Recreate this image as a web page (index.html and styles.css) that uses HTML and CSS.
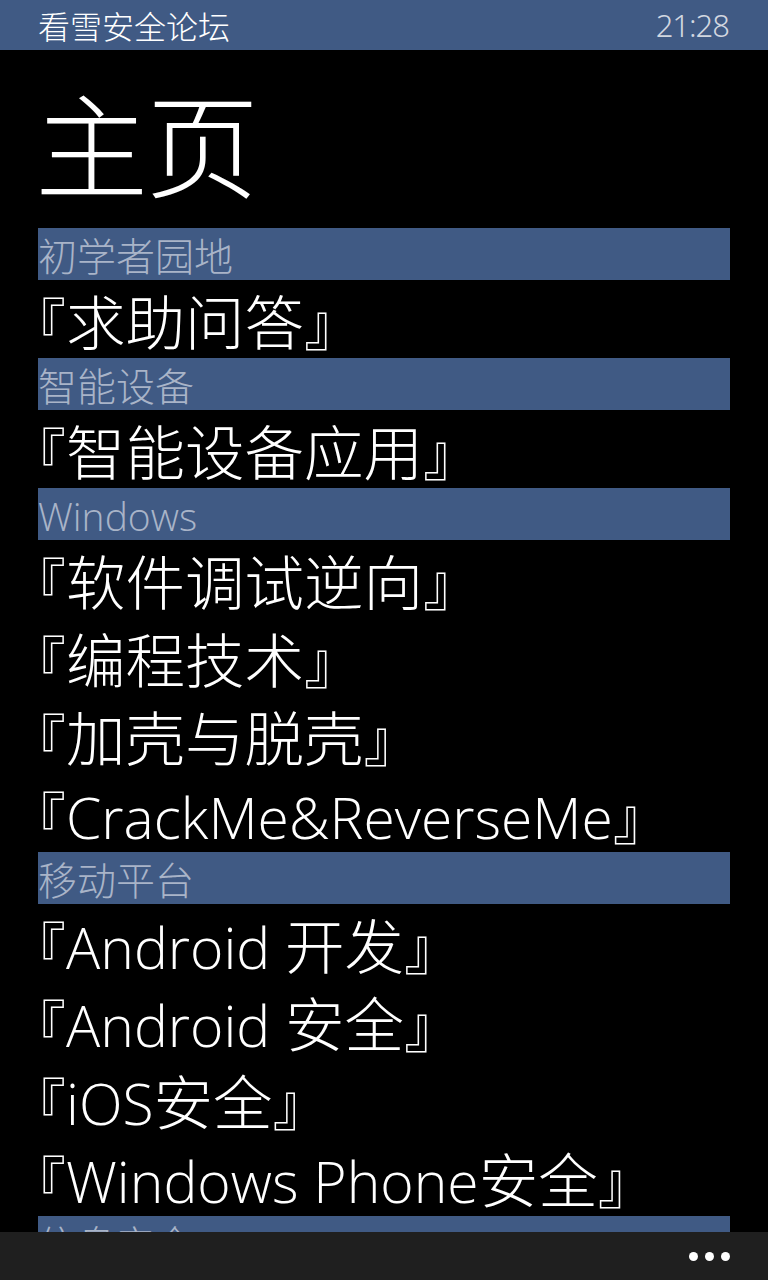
FILE: index.html
```html
<!DOCTYPE html>
<html lang="zh-CN">
<head>
<meta charset="utf-8">
<title>看雪安全论坛</title>
<link rel="stylesheet" href="styles.css">
</head>
<body>
<header class="status">
  <span class="app-name">看雪安全论坛</span>
  <span class="clock">21:28</span>
</header>
<main class="page">
  <h1 class="title">主页</h1>
  <section class="group">
    <div class="group-header">初学者园地</div>
    <div class="item"><span class="lb">『</span>求助问答<span class="rb">』</span></div>
  </section>
  <section class="group">
    <div class="group-header">智能设备</div>
    <div class="item"><span class="lb">『</span>智能设备应用<span class="rb">』</span></div>
  </section>
  <section class="group">
    <div class="group-header">Windows</div>
    <div class="item"><span class="lb">『</span>软件调试逆向<span class="rb">』</span></div>
    <div class="item"><span class="lb">『</span>编程技术<span class="rb">』</span></div>
    <div class="item"><span class="lb">『</span>加壳与脱壳<span class="rb">』</span></div>
    <div class="item"><span class="lb">『</span><span class="lat">CrackMe&amp;ReverseMe</span><span class="rb">』</span></div>
  </section>
  <section class="group">
    <div class="group-header">移动平台</div>
    <div class="item"><span class="lb">『</span><span class="lat">Android </span>开发<span class="rb">』</span></div>
    <div class="item"><span class="lb">『</span><span class="lat">Android </span>安全<span class="rb">』</span></div>
    <div class="item"><span class="lb">『</span><span class="lat">iOS</span>安全<span class="rb">』</span></div>
    <div class="item"><span class="lb">『</span><span class="lat">Windows Phone</span>安全<span class="rb">』</span></div>
  </section>
  <section class="group">
    <div class="group-header">信息安全</div>
  </section>
</main>
<footer class="appbar">
  <span class="dots"><i></i><i></i><i></i></span>
</footer>
</body>
</html>
```
FILE: styles.css
```css
html, body {
  margin: 0;
  padding: 0;
  background: #000;
  height: 1280px;
  overflow: hidden;
}
body {
  font-family: "Open Sans", "Noto Sans CJK SC", sans-serif;
  color: #fff;
}
.status {
  height: 50px;
  background: #405a84;
  display: flex;
  align-items: center;
  justify-content: space-between;
  padding: 0 39px 0 38px;
}
.app-name {
  font-family: "Noto Sans CJK SC", sans-serif;
  font-size: 32px;
  font-weight: 300;
  line-height: 50px;
  color: #fff;
}
.clock {
  font-family: "Noto Sans", sans-serif;
  font-size: 31px;
  font-weight: 300;
  letter-spacing: -1px;
  color: #d2d7e0;
  line-height: 50px;
}
.page {
  padding: 0 38px;
}
.title {
  margin: 0 0 0 -3px;
  height: 178px;
  font-family: "Noto Sans CJK SC", sans-serif;
  font-size: 113px;
  font-weight: 300;
  line-height: 180px;
  letter-spacing: -2px;
}
.group-header {
  box-sizing: border-box;
  height: 52px;
  padding-top: 4px;
  background: #405a84;
  color: #a9b4c8;
  font-family: "Open Sans", "Noto Sans CJK SC", sans-serif;
  font-size: 39px;
  font-weight: 300;
  line-height: 48px;
  white-space: nowrap;
}
.item {
  height: 78px;
  font-family: "Noto Sans CJK SC", sans-serif;
  font-size: 59.5px;
  font-weight: 300;
  line-height: 78px;
  white-space: nowrap;
}
.lat {
  font-family: "Open Sans", sans-serif;
  font-size: 57px;
}
.lb, .rb {
  font-family: "Noto Sans CJK SC", sans-serif;
  font-size: 56px;
  font-feature-settings: "halt";
}
.appbar {
  position: fixed;
  left: 0;
  right: 0;
  bottom: 0;
  height: 48px;
  background: #1f1f1f;
  display: flex;
  justify-content: flex-end;
  align-items: center;
  padding-right: 38px;
}
.dots {
  display: flex;
  gap: 7px;
}
.dots i {
  display: block;
  width: 9px;
  height: 9px;
  border-radius: 50%;
  background: #fff;
}
```
